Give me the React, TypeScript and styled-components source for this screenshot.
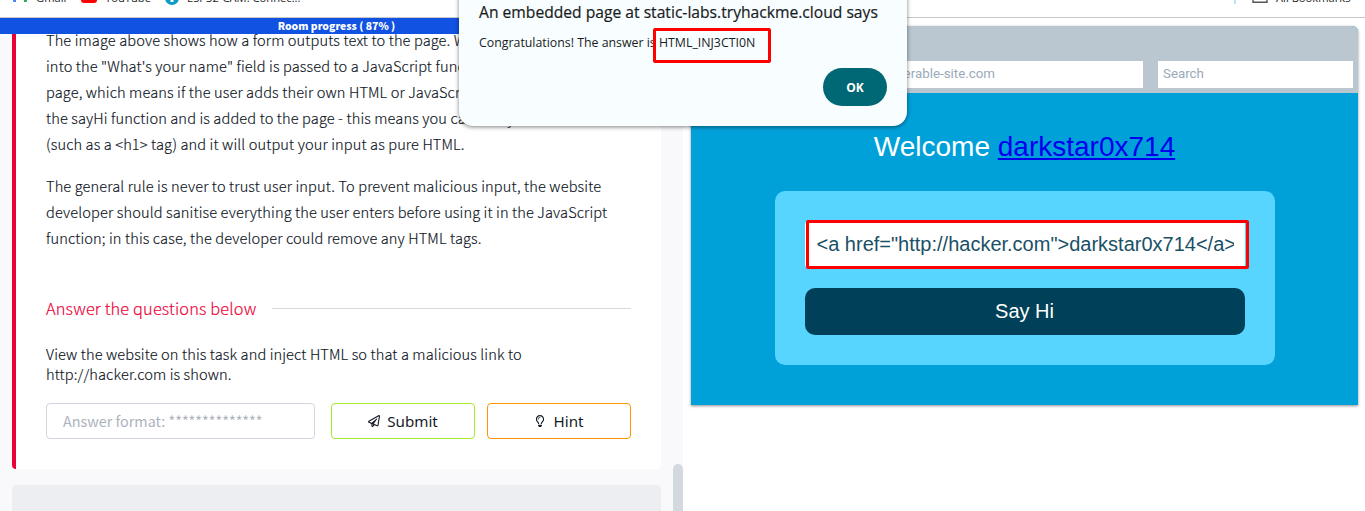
import React from "react";
import styled, { createGlobalStyle } from "styled-components";
import { FaRegLightbulb, FaRegPaperPlane } from "react-icons/fa";

const Global = createGlobalStyle`
  * { box-sizing: border-box; }
  body { margin: 0; background: #fff; overflow: hidden; }
`;

const source = `"Noto Sans CJK SC", "Noto Sans", sans-serif`;
const arial = `"Liberation Sans", Arial, sans-serif`;
const segoe = `"Open Sans", "Noto Sans", sans-serif`;

const Window = styled.div`
  position: relative;
  width: 1365px;
  height: 511px;
  overflow: hidden;
  display: flex;
  flex-direction: column;
  background: #fff;
`;

const BookmarkBar = styled.div`
  flex: none;
  height: 18px;
  border-bottom: 1px solid #c8c8c8;
  overflow: hidden;
`;

const BookmarkRow = styled.div`
  display: flex;
  align-items: center;
  height: 20px;
  margin-top: -13px;
  padding: 0 13px;
  font: 11.2px/20px ${segoe};
  color: #1f1f1f;
`;

const Bookmark = styled.span<{ $width: number; $gap: number }>`
  display: flex;
  flex: none;
  align-items: center;
  gap: ${(p) => p.$gap}px;
  width: ${(p) => p.$width}px;
  height: 20px;
  white-space: nowrap;
`;

const BookmarkName = styled.span`
  padding-top: 1px;
`;

const Divider = styled.span`
  width: 2px;
  height: 16px;
  margin: 0 16px 3px auto;
  background: #b5e8f0;
`;

const Content = styled.main`
  display: flex;
  flex: 1;
  min-height: 0;
`;

const TaskPane = styled.section`
  display: flex;
  flex-direction: column;
  width: 683px;
  background: #f9f9fb;
`;

const Progress = styled.div`
  flex: none;
  height: 16px;
  width: 673px;
  background: #1252e3;
  color: #fff;
  text-align: center;
  font: 800 10.4px/15px ${source};
`;

const TaskRow = styled.div`
  display: flex;
  flex: 1;
  justify-content: space-between;
`;

const TaskColumn = styled.div`
  display: flex;
  flex-direction: column;
  gap: 16px;
  width: 649px;
  margin-left: 12px;
`;

const TaskCard = styled.article`
  height: 435px;
  padding: 0 30px;
  border-left: 4px solid #eb0037;
  border-radius: 0 0 4px 4px;
  background: #fff;
  color: #0c1322;
  font-family: ${source};
  font-weight: 300;
`;

const NextCard = styled.div`
  height: 60px;
  border-radius: 4px 4px 0 0;
  background: #edeef2;
`;

const Thumb = styled.div`
  width: 10px;
  margin-top: 430px;
  border-radius: 5px 5px 0 0;
  background: #d3d9df;
`;

const Paragraph = styled.p`
  margin: 0 0 16px;
  font-size: 14.6px;
  line-height: 26px;
  letter-spacing: 0.12px;
  -webkit-text-stroke: 0.15px;
  &:first-child { margin-top: -7px; }
`;

const Line = styled.span`
  display: block;
  white-space: nowrap;
`;

const SectionTitle = styled.h2`
  display: flex;
  align-items: center;
  gap: 16px;
  margin: 44px 0 0;
  color: #eb0037;
  font-size: 16.4px;
  font-weight: 300;
  line-height: 26px;
  letter-spacing: 0.14px;
  white-space: nowrap;
  -webkit-text-stroke: 0.15px;
  &::after { content: ""; flex: 1; height: 1px; background: #d5d8df; }
`;

const Question = styled.p`
  margin: 23px 0 19px;
  font-size: 14.6px;
  line-height: 20px;
  letter-spacing: 0.11px;
  -webkit-text-stroke: 0.15px;
`;

const AnswerRow = styled.div`
  display: flex;
  gap: 12px;
`;

const AnswerField = styled.div`
  flex: none;
  width: 269px;
  height: 36px;
  margin-right: 4px;
  padding-left: 16px;
  border: 1px solid #d2d6de;
  border-radius: 4px;
  color: #adb3bd;
  font-size: 14.4px;
  font-weight: 400;
  line-height: 34px;
`;

const ActionButton = styled.button<{ $color: string }>`
  display: flex;
  flex: none;
  align-items: center;
  justify-content: center;
  gap: 7px;
  width: 144px;
  height: 36px;
  padding: 0;
  border: 1px solid ${(p) => p.$color};
  border-radius: 4px;
  background: #fff;
  color: #151c2b;
  font: 15.2px "Noto Sans", sans-serif;
`;

const SitePane = styled.section`
  flex: 1;
  padding: 8px 7px 0 8px;
`;

const Browser = styled.div`
  height: 379px;
  border-radius: 6px 6px 0 0;
  overflow: hidden;
  background: #00a1d9;
  box-shadow: 0 1px 3px rgba(0, 0, 0, 0.45);
`;

const BrowserHead = styled.div`
  display: flex;
  align-items: flex-end;
  gap: 15px;
  height: 67px;
  padding: 0 5px 5px;
  background: #bac7d1;
`;

const BrowserField = styled.div<{ $width: number; $indent: number }>`
  width: ${(p) => p.$width}px;
  height: 27px;
  padding-left: ${(p) => p.$indent}px;
  background: #fff;
  color: #9aaab9;
  font: 13.33px/25px Roboto, sans-serif;
  white-space: nowrap;
`;

const Site = styled.div`
  display: flex;
  flex-direction: column;
  align-items: center;
  font-family: ${arial};
`;

const Welcome = styled.h1`
  margin: 37px 0 28px;
  color: #fff;
  font-size: 28px;
  font-weight: 400;
  line-height: 33px;
  a { color: #0000ee; }
`;

const Form = styled.div`
  display: flex;
  flex-direction: column;
  gap: 20px;
  width: 500px;
  height: 174px;
  padding: 30px;
  border-radius: 10px;
  background: #57d5ff;
`;

const NameField = styled.div`
  position: relative;
  height: 47px;
  padding-left: 12px;
  border-radius: 4px;
  background: #fff;
  color: #1a5066;
  font-size: 20px;
  line-height: 46px;
  white-space: nowrap;
`;

const FieldText = styled.span`
  display: block;
  width: 417px;
  overflow: hidden;
`;

const Mark = styled.span`
  position: absolute;
  border: 3px solid #f00;
  border-radius: 2px;
`;

const NameMark = styled(Mark)`
  inset: -1px -4px -1px 1px;
`;

const SayHi = styled.button`
  height: 47px;
  padding: 0;
  border: 0;
  border-radius: 10px;
  background: #004059;
  color: #fff;
  font: 20px ${arial};
`;

const Dialog = styled.div`
  position: absolute;
  left: 459px;
  top: -20px;
  width: 448px;
  height: 146px;
  padding: 23px 20px 0;
  border-radius: 0 0 14px 14px;
  background: #f8fdff;
  box-shadow: 0 1px 4px rgba(0, 0, 0, 0.5);
  color: #191c1d;
  font-family: ${segoe};
`;

const DialogTitle = styled.div`
  font: 500 15.65px/18px ${segoe};
  white-space: nowrap;
  -webkit-text-stroke: 0.2px;
`;

const DialogText = styled.div`
  margin-top: 13px;
  font-size: 12.35px;
  line-height: 18px;
  white-space: nowrap;
`;

const DialogMark = styled(Mark)`
  left: 194px;
  top: 48px;
  width: 118px;
  height: 35px;
`;

const OkButton = styled.button`
  display: block;
  width: 64px;
  height: 38px;
  margin: 16px 0 0 auto;
  padding: 0;
  border: 0;
  border-radius: 19px;
  background: #006874;
  color: #fff;
  font: 700 12px ${segoe};
`;

const GmailIcon = () => (
  <svg width="16" height="12" viewBox="0 0 16 12">
    <path d="M0 1h3v10H1a1 1 0 0 1-1-1z" fill="#4285f4" />
    <path d="M11 1h3v9a1 1 0 0 1-1 1h-2z" fill="#34a853" />
    <path d="M0 0l7 5L14 0v3L7 7.500 0 3z" fill="#ea4335" />
  </svg>
);

const YouTubeIcon = () => (
  <svg width="16" height="12" viewBox="0 0 16 12">
    <rect width="16" height="12" rx="3" fill="#f00" />
    <path d="M6 3.500v5L11 6z" fill="#fff" />
  </svg>
);

const TutorialIcon = () => (
  <svg width="14" height="16" viewBox="0 0 14 16">
    <circle cx="7" cy="9" r="7" fill="#0b9bc4" />
    <path d="M5.500 5h3v8h-3z" fill="#fff" />
  </svg>
);

const FolderIcon = () => (
  <svg width="16" height="14" viewBox="0 0 16 14">
    <path d="M1 1.500h5l1.500 2H15v8.800H1z" fill="none" stroke="#555" strokeWidth="1.400" />
  </svg>
);

export default function App() {
  return (
    <Window>
      <Global />
      <BookmarkBar>
        <BookmarkRow>
          <Bookmark $width={68} $gap={7}><GmailIcon /><BookmarkName>Gmail</BookmarkName></Bookmark>
          <Bookmark $width={84} $gap={8}><YouTubeIcon /><BookmarkName>YouTube</BookmarkName></Bookmark>
          <Bookmark $width={140} $gap={8}><TutorialIcon /><BookmarkName>ESP32-CAM: Connec...</BookmarkName></Bookmark>
          <Divider />
          <Bookmark $width={100} $gap={8}><FolderIcon /><BookmarkName>All Bookmarks</BookmarkName></Bookmark>
        </BookmarkRow>
      </BookmarkBar>
      <Content>
        <TaskPane>
          <Progress>Room progress ( 87% )</Progress>
          <TaskRow>
            <TaskColumn>
              <TaskCard>
                <Paragraph>
                  <Line>The image above shows how a form outputs text to the page. Whatever the user inputs</Line>
                  <Line>into the "What's your name" field is passed to a JavaScript function and output to the</Line>
                  <Line>page, which means if the user adds their own HTML or JavaScript in the field, it's used in</Line>
                  <Line>the sayHi function and is added to the page - this means you can add your own HTML</Line>
                  <Line>(such as a &lt;h1&gt; tag) and it will output your input as pure HTML.</Line>
                </Paragraph>
                <Paragraph>
                  <Line>The general rule is never to trust user input. To prevent malicious input, the website</Line>
                  <Line>developer should sanitise everything the user enters before using it in the JavaScript</Line>
                  <Line>function; in this case, the developer could remove any HTML tags.</Line>
                </Paragraph>
                <SectionTitle>Answer the questions below</SectionTitle>
                <Question>
                  <Line>View the website on this task and inject HTML so that a malicious link to</Line>
                  <Line>http://hacker.com is shown.</Line>
                </Question>
                <AnswerRow>
                  <AnswerField>Answer format: **************</AnswerField>
                  <ActionButton $color="#a3ea2a"><FaRegPaperPlane size={12} />Submit</ActionButton>
                  <ActionButton $color="#ff9500"><FaRegLightbulb size={12} />Hint</ActionButton>
                </AnswerRow>
              </TaskCard>
              <NextCard />
            </TaskColumn>
            <Thumb />
          </TaskRow>
        </TaskPane>
        <SitePane>
          <Browser>
            <BrowserHead>
              <BrowserField $width={447} $indent={140}>https://vulnerable-site.com</BrowserField>
              <BrowserField $width={195} $indent={5}>Search</BrowserField>
            </BrowserHead>
            <Site>
              <Welcome>Welcome <a href="#site">darkstar0x714</a></Welcome>
              <Form>
                <NameField>
                  <FieldText>{'<a href="http://hacker.com">darkstar0x714</a>'}</FieldText>
                  <NameMark />
                </NameField>
                <SayHi>Say Hi</SayHi>
              </Form>
            </Site>
          </Browser>
        </SitePane>
      </Content>
      <Dialog>
        <DialogTitle>An embedded page at static-labs.tryhackme.cloud says</DialogTitle>
        <DialogText>Congratulations! The answer is HTML_INJ3CTI0N</DialogText>
        <DialogMark />
        <OkButton>OK</OkButton>
      </Dialog>
    </Window>
  );
}
